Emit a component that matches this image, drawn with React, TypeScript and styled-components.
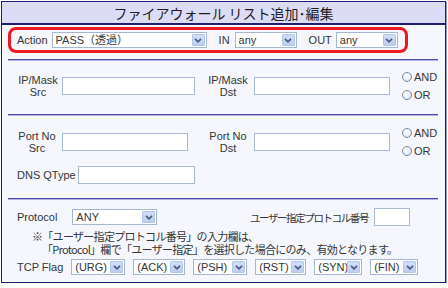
import React from "react";
import styled, { createGlobalStyle } from "styled-components";

const GlobalStyle = createGlobalStyle`
  html, body { margin: 0; padding: 0; background: #ffffff; }
  body {
    font-family: "Liberation Sans", "Noto Sans CJK JP", sans-serif;
    font-size: 11px;
    color: #363636;
  }
  * { box-sizing: border-box; }
`;

const Frame = styled.div`
  margin: 1px 0 0 1px;
  width: 445px;
  height: 282px;
  border: 1px solid #1e1e6e;
  box-shadow: 1px 1px 0 #9a9ac0;
  background: #f5f7fc;
  display: flex;
  flex-direction: column;
`;

const Title = styled.div`
  height: 23px;
  flex: none;
  background: #dcdcf6;
  border-bottom: 2px solid #1e1e6e;
  display: flex;
  align-items: center;
  justify-content: center;
  font-family: "Noto Sans CJK JP", sans-serif;
  font-size: 14px;
  color: #1e1e1e;
  line-height: 20px;
`;

const Body = styled.div`
  flex: 1;
  display: flex;
  flex-direction: column;
  padding: 0 7px 0 6px;
`;

const ActionBar = styled.div`
  margin-top: 2px;
  width: 400px;
  height: 26px;
  border: 3px solid #ea1a1e;
  border-radius: 8px;
  display: flex;
  align-items: center;
  padding-left: 6px;
  gap: 12px;
`;

const Field = styled.div<{ $gap?: number }>`
  display: flex;
  align-items: center;
  gap: ${(p) => p.$gap ?? 4}px;
`;

const Label = styled.span`
  white-space: nowrap;
  line-height: 12px;
`;

const Divider = styled.div<{ $top?: number }>`
  flex: none;
  margin-top: ${(p) => p.$top ?? 0}px;
  height: 2px;
  border-top: 1px solid #4c4ca8;
  border-bottom: 1px solid #b4b4e0;
`;

const Section = styled.div<{ $h?: number; $pt?: number }>`
  flex: ${(p) => (p.$h ? "none" : "1")};
  height: ${(p) => (p.$h ? `${p.$h}px` : "auto")};
  padding: ${(p) => p.$pt ?? 0}px 0 0 9px;
  display: flex;
  flex-direction: column;
`;

const Row = styled.div<{ $h?: number; $mt?: number }>`
  display: flex;
  align-items: center;
  height: ${(p) => (p.$h ? `${p.$h}px` : "auto")};
  margin-top: ${(p) => p.$mt ?? 0}px;
`;

const StackLabel = styled.div<{ $w: number; $ml?: number }>`
  width: ${(p) => p.$w}px;
  margin-left: ${(p) => p.$ml ?? 0}px;
  text-align: center;
  line-height: 12px;
  white-space: nowrap;
`;

const TextInput = styled.input<{ $w: number; $ml: number }>`
  width: ${(p) => p.$w}px;
  height: 18px;
  margin: 0 0 0 ${(p) => p.$ml}px;
  padding: 0 2px;
  border: 1px solid #a8bbd5;
  background: #ffffff;
  outline: none;
  font: inherit;
`;

const RadioGroup = styled.div<{ $ml: number; $gap: number }>`
  margin-left: ${(p) => p.$ml}px;
  display: flex;
  flex-direction: column;
  gap: ${(p) => p.$gap}px;
`;

const RadioItem = styled.label`
  display: flex;
  align-items: center;
  gap: 2px;
  line-height: 12px;
`;

const RadioCircle = styled.span`
  width: 10px;
  height: 10px;
  border-radius: 50%;
  border: 1px solid #7889a6;
  background: radial-gradient(circle at 40% 35%, #ffffff 0%, #e9edf4 60%, #d4dbe8 100%);
`;

const SelectBox = styled.div<{ $w: number; $ml?: number }>`
  width: ${(p) => p.$w}px;
  margin-left: ${(p) => p.$ml ?? 0}px;
  height: 16px;
  flex: none;
  display: flex;
  align-items: center;
  border: 1px solid #a6b7d1;
  background: #ffffff;
  padding: 0 1px 0 3px;
`;

const SelectValue = styled.span`
  flex: 1;
  white-space: nowrap;
  overflow: hidden;
  line-height: 14px;
  font-size: 11px;
`;

const ArrowBtn = styled.span`
  width: 13px;
  height: 12px;
  flex: none;
  display: flex;
  align-items: center;
  justify-content: center;
  background: linear-gradient(#d2def8, #bccdf0);
  border: 1px solid #b3c5ea;
  border-radius: 1px;
`;

const Note = styled.div`
  margin-top: 4px;
  padding-left: 15px;
  font-family: "Noto Sans CJK JP", sans-serif;
  font-size: 11px;
  letter-spacing: -0.7px;
  line-height: 13px;
  color: #363636;
`;

const NoteLine = styled.div<{ $indent?: number }>`
  padding-left: ${(p) => p.$indent ?? 0}px;
  white-space: nowrap;
`;

const FlagList = styled.div`
  display: flex;
  gap: 8px;
  margin-left: 8px;
`;

const UserProto = styled.div`
  margin-left: auto;
  margin-right: 28px;
  display: flex;
  align-items: center;
  gap: 6px;
  font-family: "Noto Sans CJK JP", sans-serif;
  font-size: 10.5px;
  letter-spacing: -1.4px;
`;

const Chevron = () => (
  <svg width="8" height="5" viewBox="0 0 8 5">
    <path d="M1 0.8 L4 3.8 L7 0.8" fill="none" stroke="#4a5a80" strokeWidth="1.7" />
  </svg>
);

const Select = ({ w, value, ml }: { w: number; value: string; ml?: number }) => (
  <SelectBox $w={w} $ml={ml}>
    <SelectValue>{value}</SelectValue>
    <ArrowBtn>
      <Chevron />
    </ArrowBtn>
  </SelectBox>
);

const Radios = ({ ml, gap }: { ml: number; gap: number }) => (
  <RadioGroup $ml={ml} $gap={gap}>
    <RadioItem>
      <RadioCircle />
      AND
    </RadioItem>
    <RadioItem>
      <RadioCircle />
      OR
    </RadioItem>
  </RadioGroup>
);

const flags = [
  { v: "(URG)", w: 54 },
  { v: "(ACK)", w: 52 },
  { v: "(PSH)", w: 54 },
  { v: "(RST)", w: 51 },
  { v: "(SYN)", w: 48 },
  { v: "(FIN)", w: 48 },
];

export default function App() {
  return (
    <>
      <GlobalStyle />
      <Frame>
        <Title>ファイアウォール リスト追加･編集</Title>
        <Body>
          <ActionBar>
            <Field>
              <Label>Action</Label>
              <Select w={155} value="PASS（透過）" />
            </Field>
            <Field $gap={5}>
              <Label>IN</Label>
              <Select w={62} value="any" />
            </Field>
            <Field $gap={4}>
              <Label>OUT</Label>
              <Select w={62} value="any" />
            </Field>
          </ActionBar>
          <Divider $top={6} />
          <Section $h={53}>
            <Row $h={50}>
              <StackLabel $w={42}>
                IP/Mask
                <br />
                Src
              </StackLabel>
              <TextInput $w={133} $ml={3} />
              <StackLabel $w={42} $ml={12}>
                IP/Mask
                <br />
                Dst
              </StackLabel>
              <TextInput $w={136} $ml={5} />
              <Radios ml={12} gap={6} />
            </Row>
          </Section>
          <Divider />
          <Section $h={82} $pt={8}>
            <Row $h={36}>
              <StackLabel $w={40}>
                Port No
                <br />
                Src
              </StackLabel>
              <TextInput $w={126} $ml={5} />
              <StackLabel $w={42} $ml={19}>
                Port No
                <br />
                Dst
              </StackLabel>
              <TextInput $w={136} $ml={5} />
              <Radios ml={12} gap={6} />
            </Row>
            <Row $mt={6}>
              <Label>DNS QType</Label>
              <TextInput $w={117} $ml={2} />
            </Row>
          </Section>
          <Divider />
          <Section $pt={8}>
            <Row $h={18}>
              <Label>Protocol</Label>
              <Select w={85} value="ANY" ml={15} />
              <UserProto>
                <span>ユーザー指定プロトコル番号</span>
                <TextInput $w={36} $ml={0} />
              </UserProto>
            </Row>
            <Note>
              <NoteLine>※「ユーザー指定プロトコル番号」の入力欄は、</NoteLine>
              <NoteLine $indent={10}>「Protocol」欄で「ユーザー指定」を選択した場合にのみ、有効となります。</NoteLine>
            </Note>
            <Row $mt={3}>
              <Label>TCP Flag</Label>
              <FlagList>
                {flags.map((f) => (
                  <Select key={f.v} w={f.w} value={f.v} />
                ))}
              </FlagList>
            </Row>
          </Section>
        </Body>
      </Frame>
    </>
  );
}
